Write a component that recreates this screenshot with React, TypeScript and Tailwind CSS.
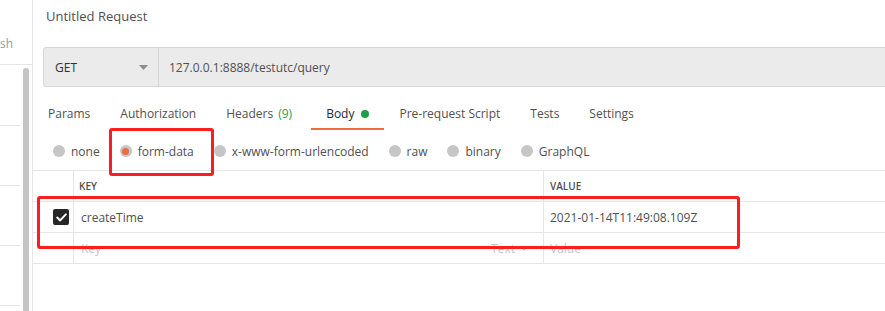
import React from "react";

function Radio({ label, selected }: { label: string; selected?: boolean }) {
  return (
    <div className="flex items-center mr-[20px]">
      <span className="flex h-[12px] w-[12px] items-center justify-center rounded-full bg-[#c6c6c6]">
        {selected && <span className="h-[7px] w-[7px] rounded-full bg-[#f26b3a]" />}
      </span>
      <span className="ml-[6px] text-[#505050]">{label}</span>
    </div>
  );
}

function Tab({ label, active, extra }: { label: string; active?: boolean; extra?: React.ReactNode }) {
  return (
    <div
      className={
        "flex h-[31px] items-center px-[15px] border-b-2 " +
        (active ? "border-[#f26b3a] text-[#282828]" : "border-transparent text-[#505050]")
      }
    >
      <span>{label}</span>
      {extra}
    </div>
  );
}

export default function App() {
  return (
    <div className="relative flex h-[311px] w-[885px] overflow-hidden bg-white font-['Open_Sans',sans-serif] text-[12px] leading-[17px] text-[#505050]">
      {/* Sidebar */}
      <div className="flex w-[33px] shrink-0 flex-col border-r border-[#e6e6e6]">
        <div className="h-[65px] shrink-0 border-b border-[#e6e6e6] pt-[35px] text-[#9a9a9a]">sh</div>
        <div className="flex flex-1">
          <div className="flex w-[20px] flex-col">
            <div className="h-[61px] shrink-0 border-b border-[#e6e6e6]" />
            <div className="h-[60px] shrink-0 border-b border-[#e6e6e6]" />
            <div className="h-[60px] shrink-0 border-b border-[#e6e6e6]" />
            <div className="h-[60px] shrink-0 border-b border-[#e6e6e6]" />
          </div>
          <div className="ml-[3px] mt-[3px] w-[6px] rounded-t-[3px] bg-[#c4c4c4]" />
        </div>
      </div>

      {/* Main */}
      <div className="flex min-w-0 flex-1 flex-col overflow-hidden">
        <div className="h-[47px] shrink-0 pl-[13px] pt-[7px] text-[13px] leading-[18px] text-[#505050]">
          Untitled Request
        </div>

        <div className="ml-[10px] mr-[-10px] flex h-[40px] shrink-0 rounded-[3px] border border-[#d6d6d6] bg-[#ebebeb]">
          <div className="flex w-[115px] items-center justify-between border-r border-[#d6d6d6] pl-[11px] pr-[10px] text-[#303030]">
            <span>GET</span>
            <svg width="9" height="5" viewBox="0 0 9 5">
              <path d="M0 0 L9 0 L4.5 5 Z" fill="#8c8c8c" />
            </svg>
          </div>
          <div className="flex items-center pl-[10px] text-[#505050]">127.0.0.1:8888/testutc/query</div>
        </div>

        <div className="mt-[11px] flex h-[32px] shrink-0 items-end">
          <Tab label="Params" />
          <Tab label="Authorization" />
          <Tab
            label="Headers"
            extra={<span className="ml-[5px] mr-[4px] text-[#26a35a]">(9)</span>}
          />
          <Tab
            label="Body"
            active
            extra={<span className="ml-[7px] h-[8px] w-[8px] rounded-full bg-[#1f9d4f]" />}
          />
          <Tab label="Pre-request Script" />
          <Tab label="Tests" />
          <Tab label="Settings" />
        </div>

        <div className="flex h-[40px] shrink-0 items-center pl-[20px] pt-[2px]">
          <Radio label="none" />
          <Radio label="form-data" selected />
          <Radio label="x-www-form-urlencoded" />
          <Radio label="raw" />
          <Radio label="binary" />
          <Radio label="GraphQL" />
        </div>

        {/* Table */}
        <div className="flex flex-col border-t border-[#e6e6e6]">
          <div className="flex h-[31px] border-b border-[#e6e6e6]">
            <div className="w-[41px] shrink-0 border-r border-[#e6e6e6]" />
            <div className="flex w-[470px] shrink-0 items-center border-r border-[#e6e6e6] pl-[5px] text-[10px] font-semibold text-[#505050]">
              KEY
            </div>
            <div className="flex flex-1 items-center pl-[6px] text-[10px] font-semibold text-[#505050]">VALUE</div>
          </div>
          <div className="flex h-[31px] border-b border-[#e6e6e6]">
            <div className="flex w-[41px] shrink-0 items-center border-r border-[#e6e6e6] pl-[20px]">
              <span className="flex h-[16px] w-[16px] items-center justify-center rounded-[2px] bg-[#282828]">
                <svg width="11" height="9" viewBox="0 0 11 9">
                  <path d="M1.2 4.6 L4.2 7.4 L9.8 1.4" fill="none" stroke="#ffffff" strokeWidth="2" strokeLinecap="round" strokeLinejoin="round" />
                </svg>
              </span>
            </div>
            <div className="flex w-[470px] shrink-0 items-center border-r border-[#e6e6e6] pl-[7px] text-[#505050]">
              createTime
            </div>
            <div className="flex flex-1 items-center pl-[6px] text-[#505050]">2021-01-14T11:49:08.109Z</div>
          </div>
          <div className="flex h-[31px] border-b border-[#e6e6e6]">
            <div className="w-[41px] shrink-0 border-r border-[#e6e6e6]" />
            <div className="flex w-[470px] shrink-0 items-center justify-between border-r border-[#e6e6e6] pl-[7px] pr-[15px] text-[#c4c4c4]">
              <span>Key</span>
              <span className="flex items-center">
                Text
                <svg className="ml-[5px]" width="8" height="5" viewBox="0 0 8 5">
                  <path d="M0 0 L8 0 L4 5 Z" fill="#c4c4c4" />
                </svg>
              </span>
            </div>
            <div className="flex flex-1 items-center pl-[6px] text-[#c4c4c4]">Value</div>
          </div>
        </div>
      </div>

      {/* Annotation boxes */}
      <div className="absolute left-[109px] top-[128px] h-[48px] w-[105px] rounded-[3px] border-[3px] border-[#fa1e1e]" />
      <div className="absolute left-[37px] top-[196px] h-[53px] w-[703px] rounded-[3px] border-[3px] border-[#fa1e1e]" />
    </div>
  );
}
